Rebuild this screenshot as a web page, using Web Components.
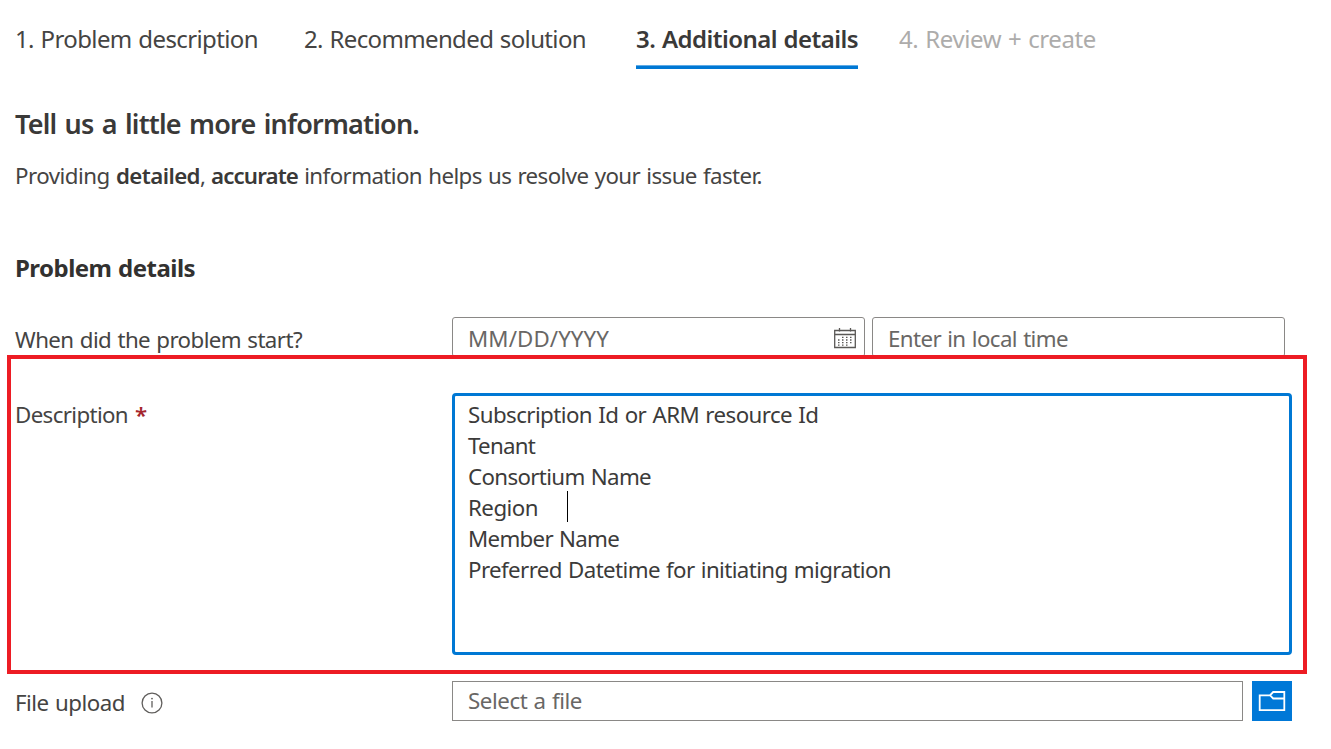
<!DOCTYPE html>
<html lang="en">
<head>
<meta charset="utf-8">
<title>New support request</title>
<style>
html,body{margin:0;background:#fff;overflow:hidden}
body{font-family:"Noto Sans","Open Sans",sans-serif;font-weight:400;word-spacing:1px;color:#323130}
</style>
</head>
<body>
<support-page></support-page>
<script>
const define=(name,html,init)=>customElements.define(name,class extends HTMLElement{
  connectedCallback(){
    if(this.shadowRoot)return;
    this.attachShadow({mode:"open"}).innerHTML=html;
    if(init)init.call(this,this.shadowRoot);
  }
});

/* A single line of text tracked to a given width. */
define("fit-text",`<style>:host{display:inline-block;white-space:pre;flex:none}</style><slot></slot>`,function(){
  const w=+this.getAttribute("w");
  const natural=this.getBoundingClientRect().width;
  this.style.letterSpacing=((w-natural)/this.textContent.length).toFixed(4)+"px";
  this.style.width=w+"px";
});

define("wizard-tab",`<style>
:host{display:block;box-sizing:border-box;height:69px;padding-top:23px;font-size:24px;line-height:32px;color:#454443}
:host([active]){font-weight:600;color:#3a3938;background:linear-gradient(#5fabe6 0 1px,#0078d4 1px) bottom/100% 4px no-repeat}
:host([disabled]){color:#adacab}
</style><slot></slot>`);

define("calendar-icon",`<style>:host{display:block;width:22px;height:21px}svg{display:block}</style>
<svg width="22" height="21" viewBox="0 0 22 21" fill="none" stroke="#5a5856">
<path d="M.7 2.5h20.6v17H.7zM.7 6.5h20.6" stroke-width="1.3"/><path d="M5.5 0v3.5M16.5 0v3.5" stroke-width="1.3"/>
<path d="M8 9.3h10M4 12h14M4 14.6h14M4 17.2h10" stroke-width="1.3" stroke-dasharray="1.5 2.5"/></svg>`);

define("info-icon",`<style>:host{display:block;width:22px;height:22px}svg{display:block}</style>
<svg width="22" height="22" viewBox="0 0 22 22"><circle cx="11" cy="11" r="9.9" fill="none" stroke="#605e5c" stroke-width="1.3"/>
<path d="M11 9v6.5" stroke="#605e5c" stroke-width="1.3"/><circle cx="11" cy="6.6" r=".9" fill="#605e5c"/></svg>`);

define("folder-button",`<style>:host{display:block;width:40px;height:40px;background:#0078d7}svg{display:block}</style>
<svg width="40" height="40" viewBox="0 0 40 40" fill="none" stroke="#fff" stroke-width="1.8">
<path d="M18 14.3H7.7v14.9h24.6V11H21.2L18 14.3l3.2 3.2h11.1"/></svg>`);

define("text-field",`<style>
:host{display:flex;box-sizing:border-box;height:40px;border:1px solid #8a8886;border-radius:3px;padding:0 8px 0 15px;justify-content:space-between;font-size:22.3px;line-height:31px;color:#696765}
</style><slot></slot>`);

define("text-editor",`<style>
:host{display:flex;flex-direction:column;box-sizing:border-box;width:840px;height:262px;border:3px solid #0078d4;border-radius:4px;padding:3px 13px;font-size:22.3px;line-height:31px;color:#3c3b3a}
.line{display:flex;align-items:flex-start;height:31px}
i{width:1px;height:31px;margin:-1px 0 0 29px;background:#000}
</style>
<div class="line"><fit-text w="350.5">Subscription Id or ARM resource Id</fit-text></div>
<div class="line"><fit-text w="67">Tenant</fit-text></div>
<div class="line"><fit-text w="183">Consortium Name</fit-text></div>
<div class="line"><fit-text w="70">Region</fit-text><i></i></div>
<div class="line"><fit-text w="151">Member Name</fit-text></div>
<div class="line"><fit-text w="423">Preferred Datetime for initiating migration</fit-text></div>`);

define("form-label",`<style>:host{display:flex;flex:none;width:437px;font-size:22.3px;line-height:31px;color:#454443}</style><slot></slot>`);

define("support-page",`<style>
:host{display:block;width:1331px;height:749px;overflow:hidden}
nav{display:flex;padding-left:15px}
h1,h2,p{margin:0;padding-left:15px}
h1{margin-top:36px;font-size:27px;line-height:38px;font-weight:600;word-spacing:2px;color:#3a3938}
p{margin-top:17px;font-size:22.3px;line-height:31px;height:31px;color:#454443}
b{font-weight:600;color:#3a3938}
h2{margin-top:61px;font-size:24px;line-height:32px;font-weight:700}
.row{display:flex;padding-left:15px}
.when{margin-top:33px;height:38px;overflow:hidden}
.when form-label{padding-top:7px}
.when text-field{width:413px;padding-top:5px;margin-right:7px}
calendar-icon{margin-top:5px}
.marked{box-sizing:border-box;width:1300px;height:319px;margin-left:7px;border:4px solid #ed1c24;padding:34px 0 0 4px;display:flex}
.marked form-label{padding-top:6px}
.star{color:#a4262c;margin-left:7px;font-weight:600}
.file{margin-top:7px}
.file form-label{padding-top:6px}
.file text-field{width:791px;padding-top:3px;border-radius:0;margin-right:9px}
info-icon{margin:5px 0 0 16px}
</style>
<nav>
<wizard-tab><fit-text w="243">1. Problem description</fit-text></wizard-tab>
<wizard-tab style="margin-left:46px"><fit-text w="282">2. Recommended solution</fit-text></wizard-tab>
<wizard-tab active style="margin-left:50px"><fit-text w="222">3. Additional details</fit-text></wizard-tab>
<wizard-tab disabled style="margin-left:41px"><fit-text w="197">4. Review + create</fit-text></wizard-tab>
</nav>
<h1><fit-text w="404">Tell us a little more information.</fit-text></h1>
<p><fit-text w="101">Providing </fit-text><b><fit-text w="84">detailed</fit-text></b><fit-text w="11">, </fit-text><b><fit-text w="87">accurate</fit-text></b><fit-text w="464"> information helps us resolve your issue faster.</fit-text></p>
<h2><fit-text w="180">Problem details</fit-text></h2>
<div class="row when"><form-label><fit-text w="287">When did the problem start?</fit-text></form-label>
<text-field><fit-text w="141">MM/DD/YYYY</fit-text><calendar-icon></calendar-icon></text-field>
<text-field><fit-text w="180">Enter in local time</fit-text></text-field></div>
<section class="marked"><form-label><fit-text w="113">Description</fit-text><span class="star">*</span></form-label><text-editor></text-editor></section>
<div class="row file"><form-label><fit-text w="110">File upload</fit-text><info-icon></info-icon></form-label>
<text-field><fit-text w="114">Select a file</fit-text></text-field><folder-button></folder-button></div>`);
</script>
</body>
</html>
